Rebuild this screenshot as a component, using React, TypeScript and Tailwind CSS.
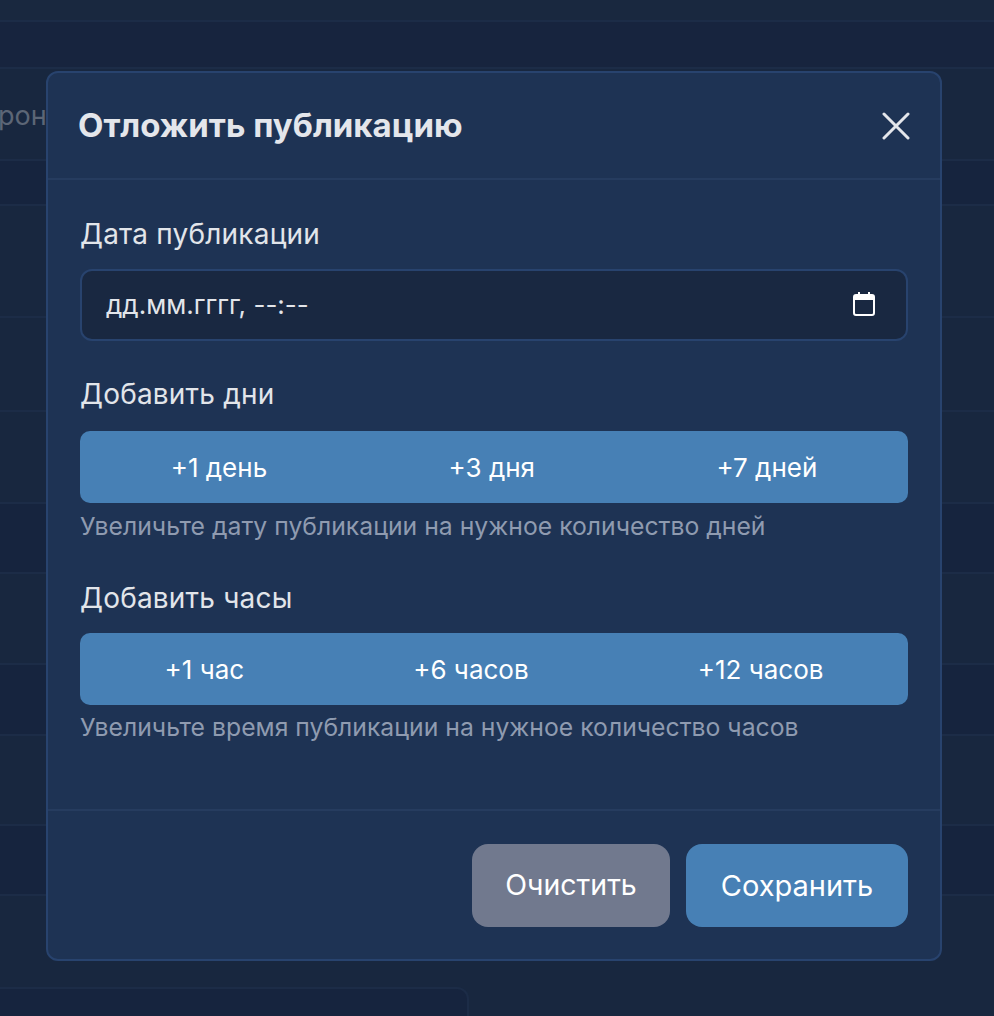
const rows = [
  { h: "h-[22px]", bg: "bg-[#19283f]" },
  { h: "h-[47px]", bg: "bg-[#17243e]" },
  { h: "h-[92px]", bg: "bg-[#18273f]" },
  { h: "h-[45px]", bg: "bg-[#16243e]" },
  { h: "h-[112px]", bg: "bg-[#18273f]" },
  { h: "h-[94px]", bg: "bg-[#18273f]" },
  { h: "h-[92px]", bg: "bg-[#18273f]" },
  { h: "h-[70px]", bg: "bg-[#16243e]" },
  { h: "h-[91px]", bg: "bg-[#18273f]" },
  { h: "h-[71px]", bg: "bg-[#16243e]" },
  { h: "h-[90px]", bg: "bg-[#18273f]" },
  { h: "h-[70px]", bg: "bg-[#16243e]" },
];

const OptionGroup = ({ options }: { options: string[] }) => (
  <div className="flex h-[72px] rounded-[10px] bg-[#4780b5]">
    {options.map((option) => (
      <button key={option} className="grow text-[26px] text-white">
        {option}
      </button>
    ))}
  </div>
);

const App = () => {
  return (
    <div className="relative h-[1016px] w-[994px] overflow-hidden bg-[#18273f] font-['Inter','Noto_Sans',sans-serif]">
      {rows.map((row, i) => (
        <div key={i} className={`${row.h} ${row.bg} border-b-2 border-[#1c2c47]`} />
      ))}
      <div className="absolute left-0 right-[525px] top-[987px] h-[40px] rounded-tr-[12px] border-2 border-l-0 border-[#1c2c47] bg-[#16243e]" />
      <span className="absolute left-[-2px] top-[96px] text-[27px] text-[#5c6676]">рон</span>

      <div className="absolute left-[46px] top-[71px] flex h-[890px] w-[896px] flex-col rounded-[12px] border-2 border-[#28436e] bg-[#1e3354]">
        <div className="flex h-[107px] shrink-0 items-center justify-between border-b-2 border-[#263c5f] pl-[30px] pr-[30px]">
          <h2 className="text-[33px] font-bold text-[#e4e6eb]">Отложить публикацию</h2>
          <button>
            <svg viewBox="0 0 28 28" className="block h-[28px] w-[28px]" stroke="#e4e6eb" strokeWidth="3" strokeLinecap="round">
              <path d="M2 2 26 26M26 2 2 26" />
            </svg>
          </button>
        </div>

        <div className="flex-1 px-[32px] pt-[34px]">
          <label className="block text-[28px] leading-[40px] tracking-[0.2px] text-[#e2e5ea]">Дата публикации</label>
          <div className="mt-[15px] flex h-[72px] items-center justify-between rounded-[12px] border-2 border-[#28436e] bg-[#192841] pl-[24px] pr-[31px]">
            <span className="pb-[2px] text-[26px] text-[#e2e5ea]">дд.мм.гггг, --:--</span>
            <svg viewBox="0 0 22 24" className="mb-[2px] h-[24px] w-[22px]" fill="none">
              <rect x="1" y="3" width="20" height="20" rx="2" stroke="#fff" strokeWidth="2" />
              <path d="M1 4h20v4H1z M5 0h2v4H5z M15 0h2v4h-2z" fill="#fff" />
            </svg>
          </div>

          <label className="mt-[33px] block text-[28px] leading-[40px] tracking-[0.2px] text-[#e2e5ea]">Добавить дни</label>
          <div className="mt-[17px]">
            <OptionGroup options={["+1 день", "+3 дня", "+7 дней"]} />
          </div>
          <p className="mt-[6px] text-[24.75px] leading-[34px] text-[#8f9bb0]">Увеличьте дату публикации на нужное количество дней</p>

          <label className="mt-[35px] block text-[28px] leading-[40px] tracking-[0.2px] text-[#e2e5ea]">Добавить часы</label>
          <div className="mt-[15px]">
            <OptionGroup options={["+1 час", "+6 часов", "+12 часов"]} />
          </div>
          <p className="mt-[5px] text-[24.75px] leading-[34px] text-[#8f9bb0]">Увеличьте время публикации на нужное количество часов</p>
        </div>

        <div className="flex h-[150px] shrink-0 items-start justify-end gap-[16px] border-t-2 border-[#263c5f] px-[32px] pt-[33px]">
          <button className="h-[83px] w-[198px] rounded-[16px] bg-[#71798e] text-[28.5px] text-white">Очистить</button>
          <button className="h-[83px] w-[222px] rounded-[16px] bg-[#4780b5] text-[29px] text-white">Сохранить</button>
        </div>
      </div>
    </div>
  );
};

export default App;
